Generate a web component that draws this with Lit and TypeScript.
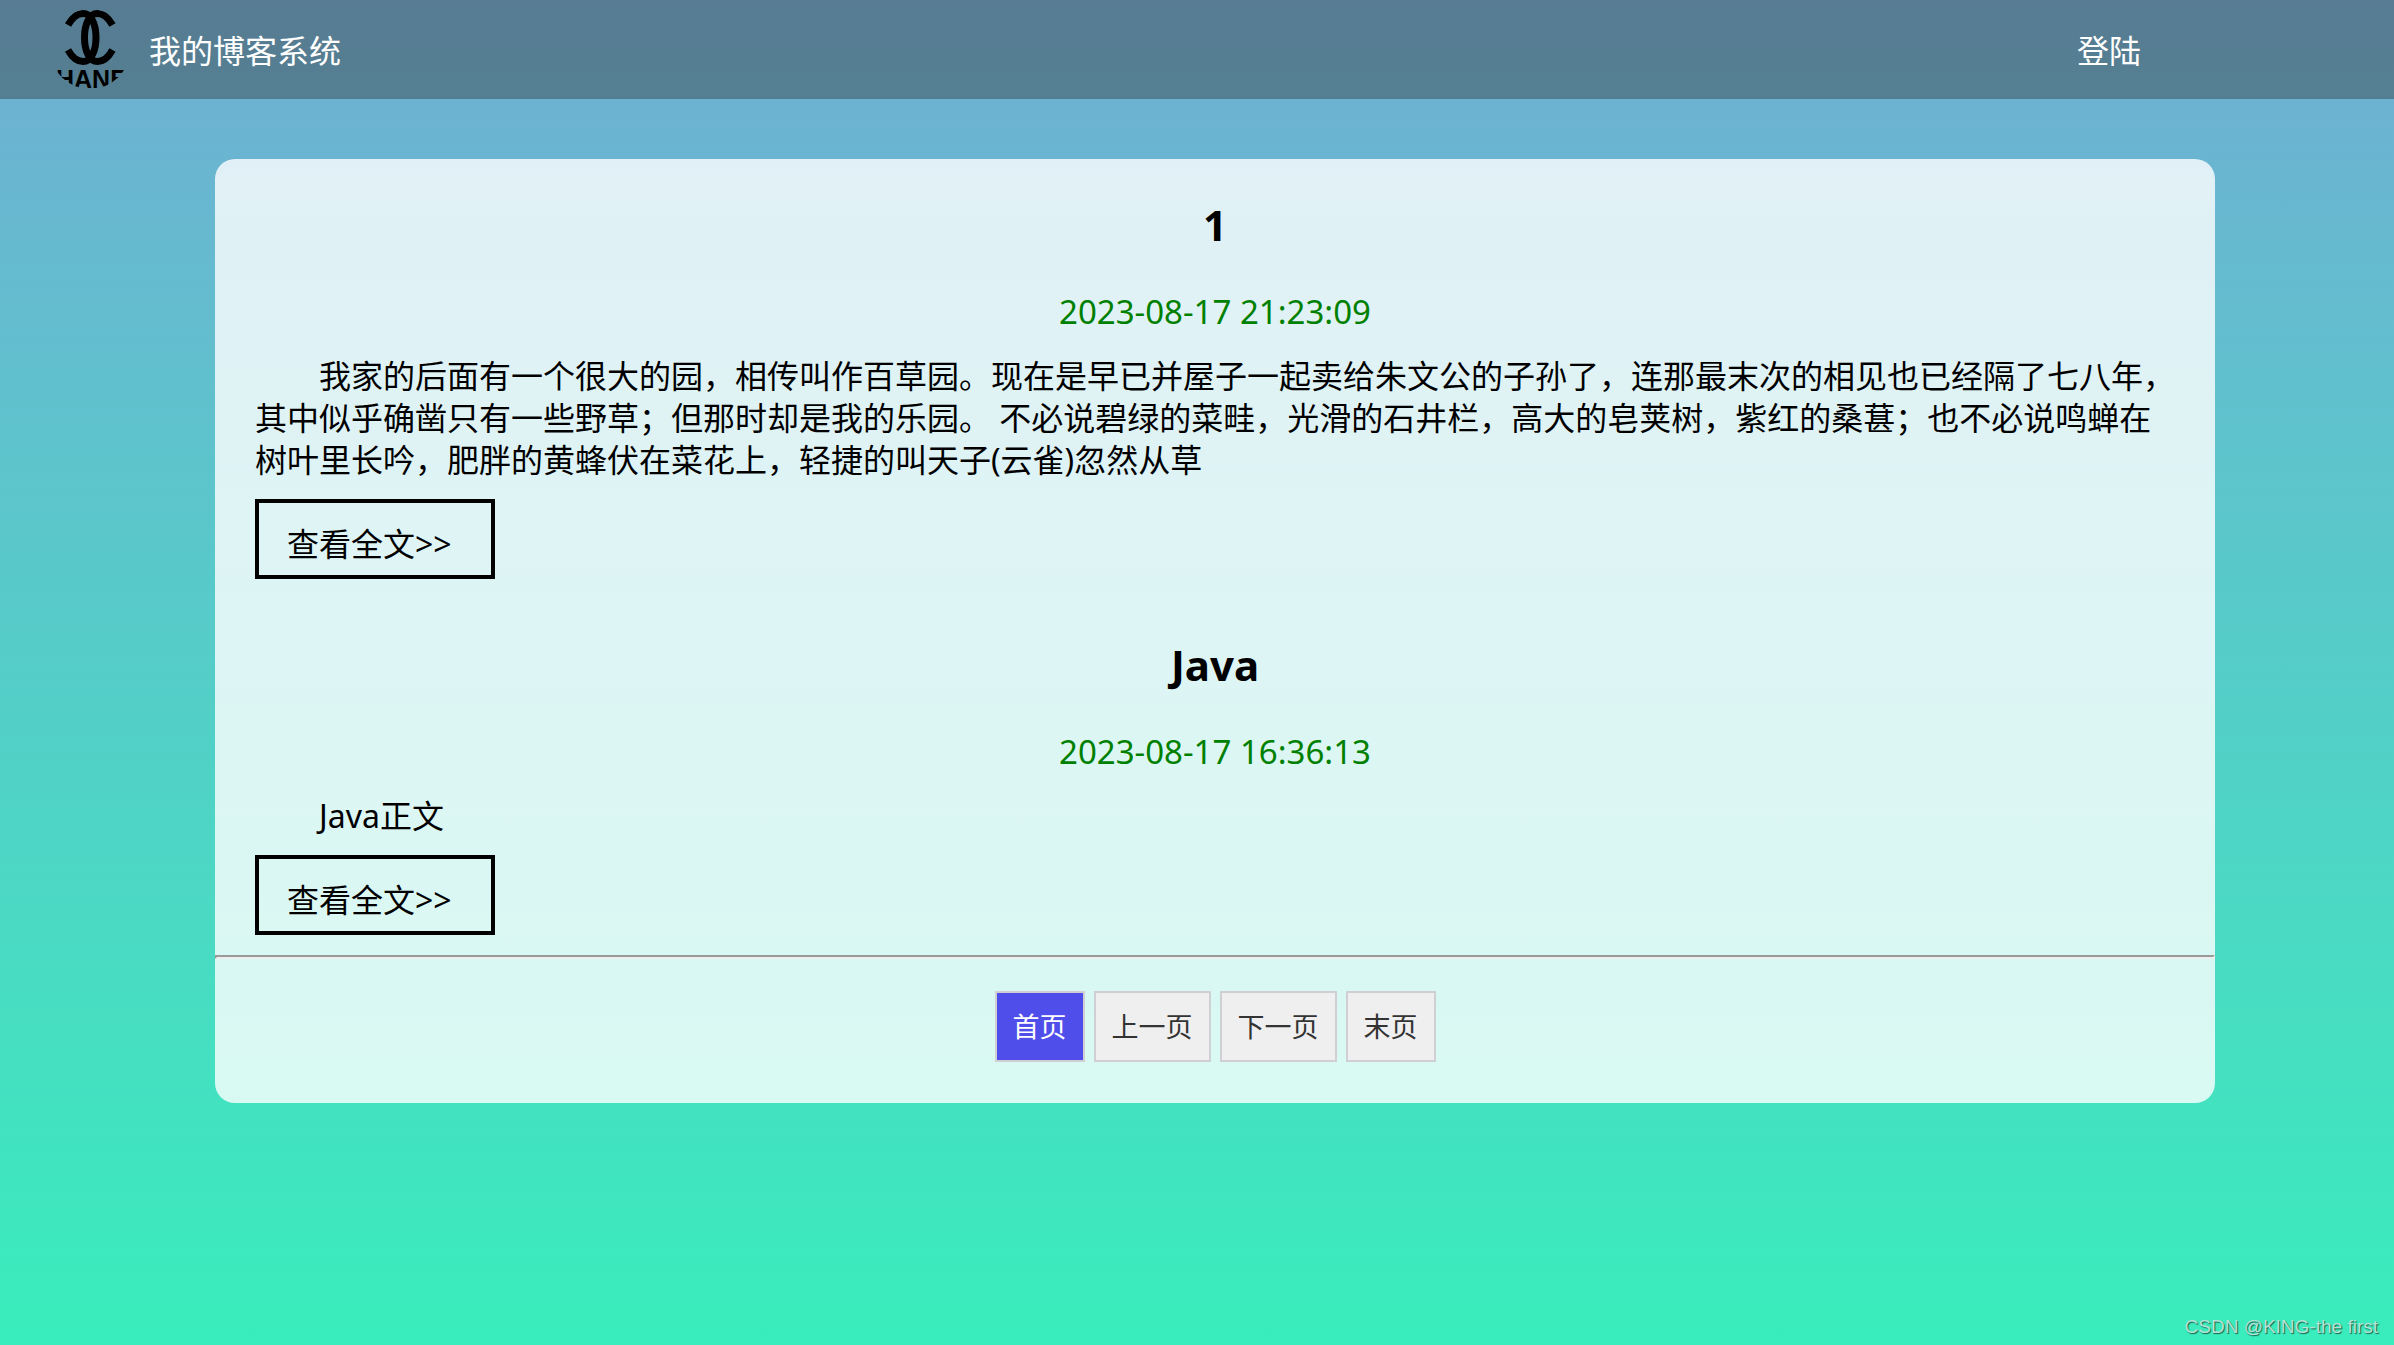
import { LitElement, html, css } from "lit";
import { customElement, property } from "lit/decorators.js";

interface Post {
  id: number;
  title: string;
  date: string;
  summary: string;
}

const POSTS: Post[] = [
  {
    id: 1,
    title: "1",
    date: "2023-08-17 21:23:09",
    summary:
      "我家的后面有一个很大的园，相传叫作百草园。现在是早已并屋子一起卖给朱文公的子孙了，连那最末次的相见也已经隔了七八年，其中似乎确凿只有一些野草；但那时却是我的乐园。 不必说碧绿的菜畦，光滑的石井栏，高大的皂荚树，紫红的桑葚；也不必说鸣蝉在树叶里长吟，肥胖的黄蜂伏在菜花上，轻捷的叫天子(云雀)忽然从草",
  },
  {
    id: 2,
    title: "Java",
    date: "2023-08-17 16:36:13",
    summary: "Java正文",
  },
];

const PAGES = ["首页", "上一页", "下一页", "末页"];

@customElement("blog-nav")
export class BlogNav extends LitElement {
  static styles = css`
    :host {
      display: block;
    }
    .nav {
      display: flex;
      align-items: center;
      box-sizing: border-box;
      height: 99px;
      padding: 0 253px 0 50px;
      background: rgba(51, 51, 51, 0.4);
      color: #fff;
      font-size: 32px;
      line-height: 44px;
    }
    .logo {
      width: 80px;
      height: 80px;
      margin: 0 19px 2px 0;
    }
    .mark {
      fill: none;
      stroke: #000;
      stroke-width: 7;
    }
    .brand {
      font-family: "Liberation Sans Narrow", "Liberation Sans", sans-serif;
      font-weight: 700;
      font-size: 25px;
    }
    .title {
      flex: 1;
      padding-top: 2px;
    }
    .login {
      padding-top: 2px;
      color: inherit;
      text-decoration: none;
    }
  `;

  render() {
    return html`
      <nav class="nav" lang="zh-CN">
        <svg class="logo" viewBox="0 0 80 80" aria-hidden="true">
          <defs>
            <clipPath id="round"><circle cx="40" cy="40" r="40" /></clipPath>
          </defs>
          <g clip-path="url(#round)">
            <path class="mark" d="M62.500 16C58 8 53 4.500 47.500 4.500C39 4.500 34.500 16 34.500 28.500S39 52.500 47.500 52.500C53 52.500 58 49 62.500 41" />
            <path class="mark" d="M18 16C22.500 8 27.500 4.500 33 4.500C41.500 4.500 46 16 46 28.500S41.500 52.500 33 52.500C27.500 52.500 22.500 49 18 41" />
            <text class="brand" x="40" y="79" text-anchor="middle">CHANEL</text>
          </g>
        </svg>
        <span class="title">我的博客系统</span>
        <a class="login" href="#login">登陆</a>
      </nav>
    `;
  }
}

@customElement("blog-post")
export class BlogPost extends LitElement {
  @property({ attribute: false }) post!: Post;

  static styles = css`
    :host {
      display: block;
    }
    .post {
      display: flex;
      flex-direction: column;
      padding: 20px 40px;
    }
    .title {
      margin: 20px 0 40px;
      font-size: 42px;
      line-height: 52px;
      font-weight: 700;
      text-align: center;
    }
    .date {
      font-size: 33px;
      line-height: 42px;
      color: #008000;
      text-align: center;
    }
    .summary {
      margin: 22px 0 18px;
      text-indent: 2em;
    }
    .more {
      align-self: flex-start;
      box-sizing: border-box;
      min-width: 240px;
      padding: 20px 28px 10px;
      border: 4px solid #000;
      color: #000;
      text-decoration: none;
    }
  `;

  render() {
    return html`
      <article class="post">
        <h2 class="title">${this.post.title}</h2>
        <time class="date">${this.post.date}</time>
        <p class="summary">${this.post.summary}</p>
        <a class="more" href="#post-${this.post.id}">查看全文&gt;&gt;</a>
      </article>
    `;
  }
}

@customElement("app-root")
export class AppRoot extends LitElement {
  static styles = css`
    :host {
      display: block;
      position: relative;
      min-height: 100vh;
      background: linear-gradient(to bottom, #70aed4, #39edbc);
      font-family: "Noto Sans", "Noto Sans CJK SC", sans-serif;
      font-size: 32px;
      line-height: 42px;
      color: #000;
    }
    .page {
      padding: 60px 179px 60px 215px;
    }
    .card {
      border-radius: 20px;
      background: rgba(255, 255, 255, 0.8);
    }
    .rule {
      margin: 0;
      border: 2px inset #eee;
    }
    .pages {
      display: flex;
      justify-content: center;
      gap: 9px;
      padding: 32px 0 41px;
    }
    .page-button {
      padding: 16px;
      border: 2px solid #d0cfd3;
      border-radius: 0;
      background: #efefef;
      color: #333;
      font-family: inherit;
      font-size: 27px;
      line-height: 35px;
    }
    .page-button.active {
      background: #4f4eea;
      color: #fff;
    }
    .watermark {
      position: absolute;
      right: 16px;
      bottom: 6px;
      font-family: "Liberation Sans", sans-serif;
      font-size: 19px;
      line-height: 24px;
      color: #b5e3d5;
      text-shadow: 1px 1px 1px rgba(0, 0, 0, 0.6);
    }
  `;

  render() {
    return html`
      <blog-nav></blog-nav>
      <main class="page" lang="zh-CN">
        <section class="card">
          ${POSTS.map((post) => html`<blog-post .post=${post}></blog-post>`)}
          <hr class="rule" />
          <div class="pages">
            ${PAGES.map(
              (label, i) =>
                html`<button type="button" class="page-button ${i === 0 ? "active" : ""}">${label}</button>`
            )}
          </div>
        </section>
      </main>
      <span class="watermark">CSDN @KING-the first</span>
    `;
  }
}
